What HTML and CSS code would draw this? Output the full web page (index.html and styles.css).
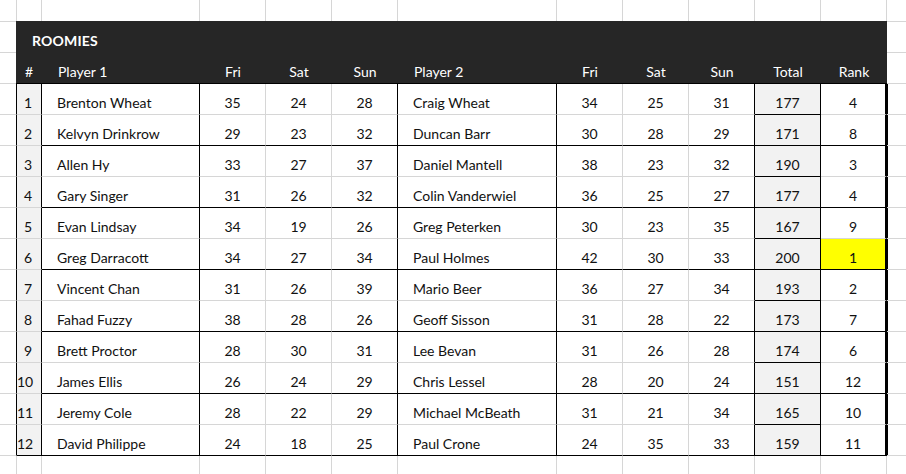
FILE: index.html
```html
<!DOCTYPE html>
<html lang="en">
<head>
<meta charset="utf-8">
<title>Roomies</title>
<link rel="stylesheet" href="styles.css">
</head>
<body>
<div class="sheet">
  <div class="row top">
    <div class="cell out-l"></div><div class="cell"></div><div class="cell"></div><div class="cell"></div><div class="cell"></div><div class="cell"></div><div class="cell"></div><div class="cell"></div><div class="cell"></div><div class="cell"></div><div class="cell"></div><div class="cell"></div><div class="cell out-r"></div>
  </div>
  <div class="row hdr-side"><div class="cell out-l"></div><div class="cell out-r"></div></div>
  <div class="row hdr-side"><div class="cell out-l"></div><div class="cell out-r"></div></div>

  <div class="header">
    <div class="title">ROOMIES</div>
    <div class="h num-h">#</div>
    <div class="h name-h">Player 1</div>
    <div class="h">Fri</div>
    <div class="h">Sat</div>
    <div class="h">Sun</div>
    <div class="h name-h">Player 2</div>
    <div class="h">Fri</div>
    <div class="h">Sat</div>
    <div class="h">Sun</div>
    <div class="h">Total</div>
    <div class="h">Rank</div>
  </div>

  <div class="row data"><div class="cell out-l"></div><div class="cell idx">1</div><div class="cell name">Brenton Wheat</div><div class="cell sc">35</div><div class="cell sc">24</div><div class="cell sc end">28</div><div class="cell name">Craig Wheat</div><div class="cell sc">34</div><div class="cell sc">25</div><div class="cell sc end">31</div><div class="cell total">177</div><div class="cell rank">4</div><div class="cell out-r"></div></div>
  <div class="row data grp"><div class="cell out-l"></div><div class="cell idx">2</div><div class="cell name">Kelvyn Drinkrow</div><div class="cell sc">29</div><div class="cell sc">23</div><div class="cell sc end">32</div><div class="cell name">Duncan Barr</div><div class="cell sc">30</div><div class="cell sc">28</div><div class="cell sc end">29</div><div class="cell total">171</div><div class="cell rank">8</div><div class="cell out-r"></div></div>
  <div class="row data"><div class="cell out-l"></div><div class="cell idx">3</div><div class="cell name">Allen Hy</div><div class="cell sc">33</div><div class="cell sc">27</div><div class="cell sc end">37</div><div class="cell name">Daniel Mantell</div><div class="cell sc">38</div><div class="cell sc">23</div><div class="cell sc end">32</div><div class="cell total">190</div><div class="cell rank">3</div><div class="cell out-r"></div></div>
  <div class="row data grp"><div class="cell out-l"></div><div class="cell idx">4</div><div class="cell name">Gary Singer</div><div class="cell sc">31</div><div class="cell sc">26</div><div class="cell sc end">32</div><div class="cell name">Colin Vanderwiel</div><div class="cell sc">36</div><div class="cell sc">25</div><div class="cell sc end">27</div><div class="cell total">177</div><div class="cell rank">4</div><div class="cell out-r"></div></div>
  <div class="row data"><div class="cell out-l"></div><div class="cell idx">5</div><div class="cell name">Evan Lindsay</div><div class="cell sc">34</div><div class="cell sc">19</div><div class="cell sc end">26</div><div class="cell name">Greg Peterken</div><div class="cell sc">30</div><div class="cell sc">23</div><div class="cell sc end">35</div><div class="cell total">167</div><div class="cell rank">9</div><div class="cell out-r"></div></div>
  <div class="row data grp"><div class="cell out-l"></div><div class="cell idx">6</div><div class="cell name">Greg Darracott</div><div class="cell sc">34</div><div class="cell sc">27</div><div class="cell sc end">34</div><div class="cell name">Paul Holmes</div><div class="cell sc">42</div><div class="cell sc">30</div><div class="cell sc end">33</div><div class="cell total">200</div><div class="cell rank first">1</div><div class="cell out-r"></div></div>
  <div class="row data"><div class="cell out-l"></div><div class="cell idx">7</div><div class="cell name">Vincent Chan</div><div class="cell sc">31</div><div class="cell sc">26</div><div class="cell sc end">39</div><div class="cell name">Mario Beer</div><div class="cell sc">36</div><div class="cell sc">27</div><div class="cell sc end">34</div><div class="cell total">193</div><div class="cell rank">2</div><div class="cell out-r"></div></div>
  <div class="row data grp"><div class="cell out-l"></div><div class="cell idx">8</div><div class="cell name">Fahad Fuzzy</div><div class="cell sc">38</div><div class="cell sc">28</div><div class="cell sc end">26</div><div class="cell name">Geoff Sisson</div><div class="cell sc">31</div><div class="cell sc">28</div><div class="cell sc end">22</div><div class="cell total">173</div><div class="cell rank">7</div><div class="cell out-r"></div></div>
  <div class="row data"><div class="cell out-l"></div><div class="cell idx">9</div><div class="cell name">Brett Proctor</div><div class="cell sc">28</div><div class="cell sc">30</div><div class="cell sc end">31</div><div class="cell name">Lee Bevan</div><div class="cell sc">31</div><div class="cell sc">26</div><div class="cell sc end">28</div><div class="cell total">174</div><div class="cell rank">6</div><div class="cell out-r"></div></div>
  <div class="row data grp"><div class="cell out-l"></div><div class="cell idx">10</div><div class="cell name">James Ellis</div><div class="cell sc">26</div><div class="cell sc">24</div><div class="cell sc end">29</div><div class="cell name">Chris Lessel</div><div class="cell sc">28</div><div class="cell sc">20</div><div class="cell sc end">24</div><div class="cell total">151</div><div class="cell rank">12</div><div class="cell out-r"></div></div>
  <div class="row data"><div class="cell out-l"></div><div class="cell idx">11</div><div class="cell name">Jeremy Cole</div><div class="cell sc">28</div><div class="cell sc">22</div><div class="cell sc end">29</div><div class="cell name">Michael McBeath</div><div class="cell sc">31</div><div class="cell sc">21</div><div class="cell sc end">34</div><div class="cell total">165</div><div class="cell rank">10</div><div class="cell out-r"></div></div>
  <div class="row data grp last"><div class="cell out-l"></div><div class="cell idx">12</div><div class="cell name">David Philippe</div><div class="cell sc">24</div><div class="cell sc">18</div><div class="cell sc end">25</div><div class="cell name">Paul Crone</div><div class="cell sc">24</div><div class="cell sc">35</div><div class="cell sc end">33</div><div class="cell total">159</div><div class="cell rank">11</div><div class="cell out-r"></div></div>

  <div class="row bottom">
    <div class="cell out-l"></div><div class="cell"></div><div class="cell"></div><div class="cell"></div><div class="cell"></div><div class="cell"></div><div class="cell"></div><div class="cell"></div><div class="cell"></div><div class="cell"></div><div class="cell"></div><div class="cell"></div><div class="cell out-r"></div>
  </div>
</div>
</body>
</html>
```

FILE: styles.css
```css
* { box-sizing: border-box; }

html, body {
  margin: 0;
  padding: 0;
  background: #ffffff;
  overflow: hidden;
}

body {
  font-family: Lato, "Noto Sans", "Liberation Sans", sans-serif;
  font-size: 14px;
  color: #111111;
}

.sheet {
  display: grid;
  grid-template-columns: 17px 25px 158px 66px 66px 66px 159px 66px 66px 66px 66px 66px 1fr;
  grid-template-rows: 22px repeat(15, 31px);
  width: 906px;
  height: 474px;
  overflow: hidden;
}

.row { display: contents; }

.cell {
  border-right: 1px solid #d6d6d6;
  border-bottom: 1px solid #d6d6d6;
  line-height: 16px;
  padding-top: 11px;
  white-space: nowrap;
}

.cell.out-r { border-right: none; }

.hdr-side .out-l { grid-column: 1; }
.hdr-side .out-r { grid-column: 13; }

/* dark header block */
.header {
  grid-column: 2 / 13;
  grid-row: 2 / 4;
  margin-top: -1px;
  margin-left: -1px;
  background: #262626;
  border-bottom: 1px solid #000;
  color: #ffffff;
  display: grid;
  grid-template-columns: 26px 158px 66px 66px 66px 159px 66px 66px 66px 66px 66px;
  grid-template-rows: 31px 31px;
}

.title {
  grid-column: 1 / -1;
  font-weight: 700;
  padding: 12px 0 0 16px;
  line-height: 16px;
  letter-spacing: 0.2px;
}

.h {
  line-height: 16px;
  padding-top: 12px;
  text-align: center;
}

.h.num-h { text-align: right; padding-right: 9px; }
.h.name-h { text-align: left; padding-left: 16px; }

/* data rows */
.data .out-l { border-right-color: #000; }

.idx {
  background: #f2f2f2;
  border-right-color: #000;
  text-align: right;
  padding-right: 9px;
}

.name {
  border-right-color: #000;
  padding-left: 15px;
}

.sc { text-align: center; }
.sc.end { border-right-color: #000; }

.total {
  background: #f2f2f2;
  border-right-color: #000;
  border-bottom-color: #000;
  text-align: center;
}

.rank {
  text-align: center;
  border-right: 2px solid #000;
  box-shadow: 1px 0 0 #000;
}

.rank.first { background: #ffff00; }

.grp .name,
.grp .sc,
.grp .total,
.grp .rank { border-bottom-color: #000; }

.last .idx { border-bottom-color: #000; }
```
